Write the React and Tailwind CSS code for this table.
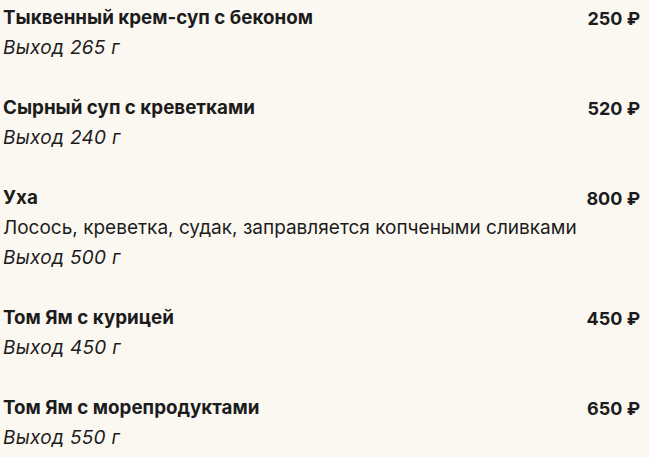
import React from "react";

const items = [
  { title: "Тыквенный крем-суп с беконом", price: "250 ₽", weight: "Выход 265 г" },
  { title: "Сырный суп с креветками", price: "520 ₽", weight: "Выход 240 г" },
  {
    title: "Уха",
    price: "800 ₽",
    desc: "Лосось, креветка, судак, заправляется копчеными сливками",
    weight: "Выход 500 г",
  },
  { title: "Том Ям с курицей", price: "450 ₽", weight: "Выход 450 г" },
  { title: "Том Ям с морепродуктами", price: "650 ₽", weight: "Выход 550 г" },
];

const App = () => {
  return (
    <div
      className="min-h-screen bg-[#fbf8f2] text-[#1c1c1c] pt-[3px] pl-[3px] pr-[9px]"
      style={{ fontFamily: 'Inter, "Noto Sans", sans-serif' }}
    >
      {items.map((item, index) => (
        <div key={index} className="mb-[30px]">
          <div className="flex justify-between items-center h-[30px]">
            <h3 className="text-[18.8px] font-bold">{item.title}</h3>
            <span className="text-[18px] font-bold">{item.price}</span>
          </div>
          {item.desc && <p className="text-[19px] leading-[30px]">{item.desc}</p>}
          <p className="text-[19px] leading-[30px] italic tracking-[0.3px]">{item.weight}</p>
        </div>
      ))}
    </div>
  );
};

export default App;
